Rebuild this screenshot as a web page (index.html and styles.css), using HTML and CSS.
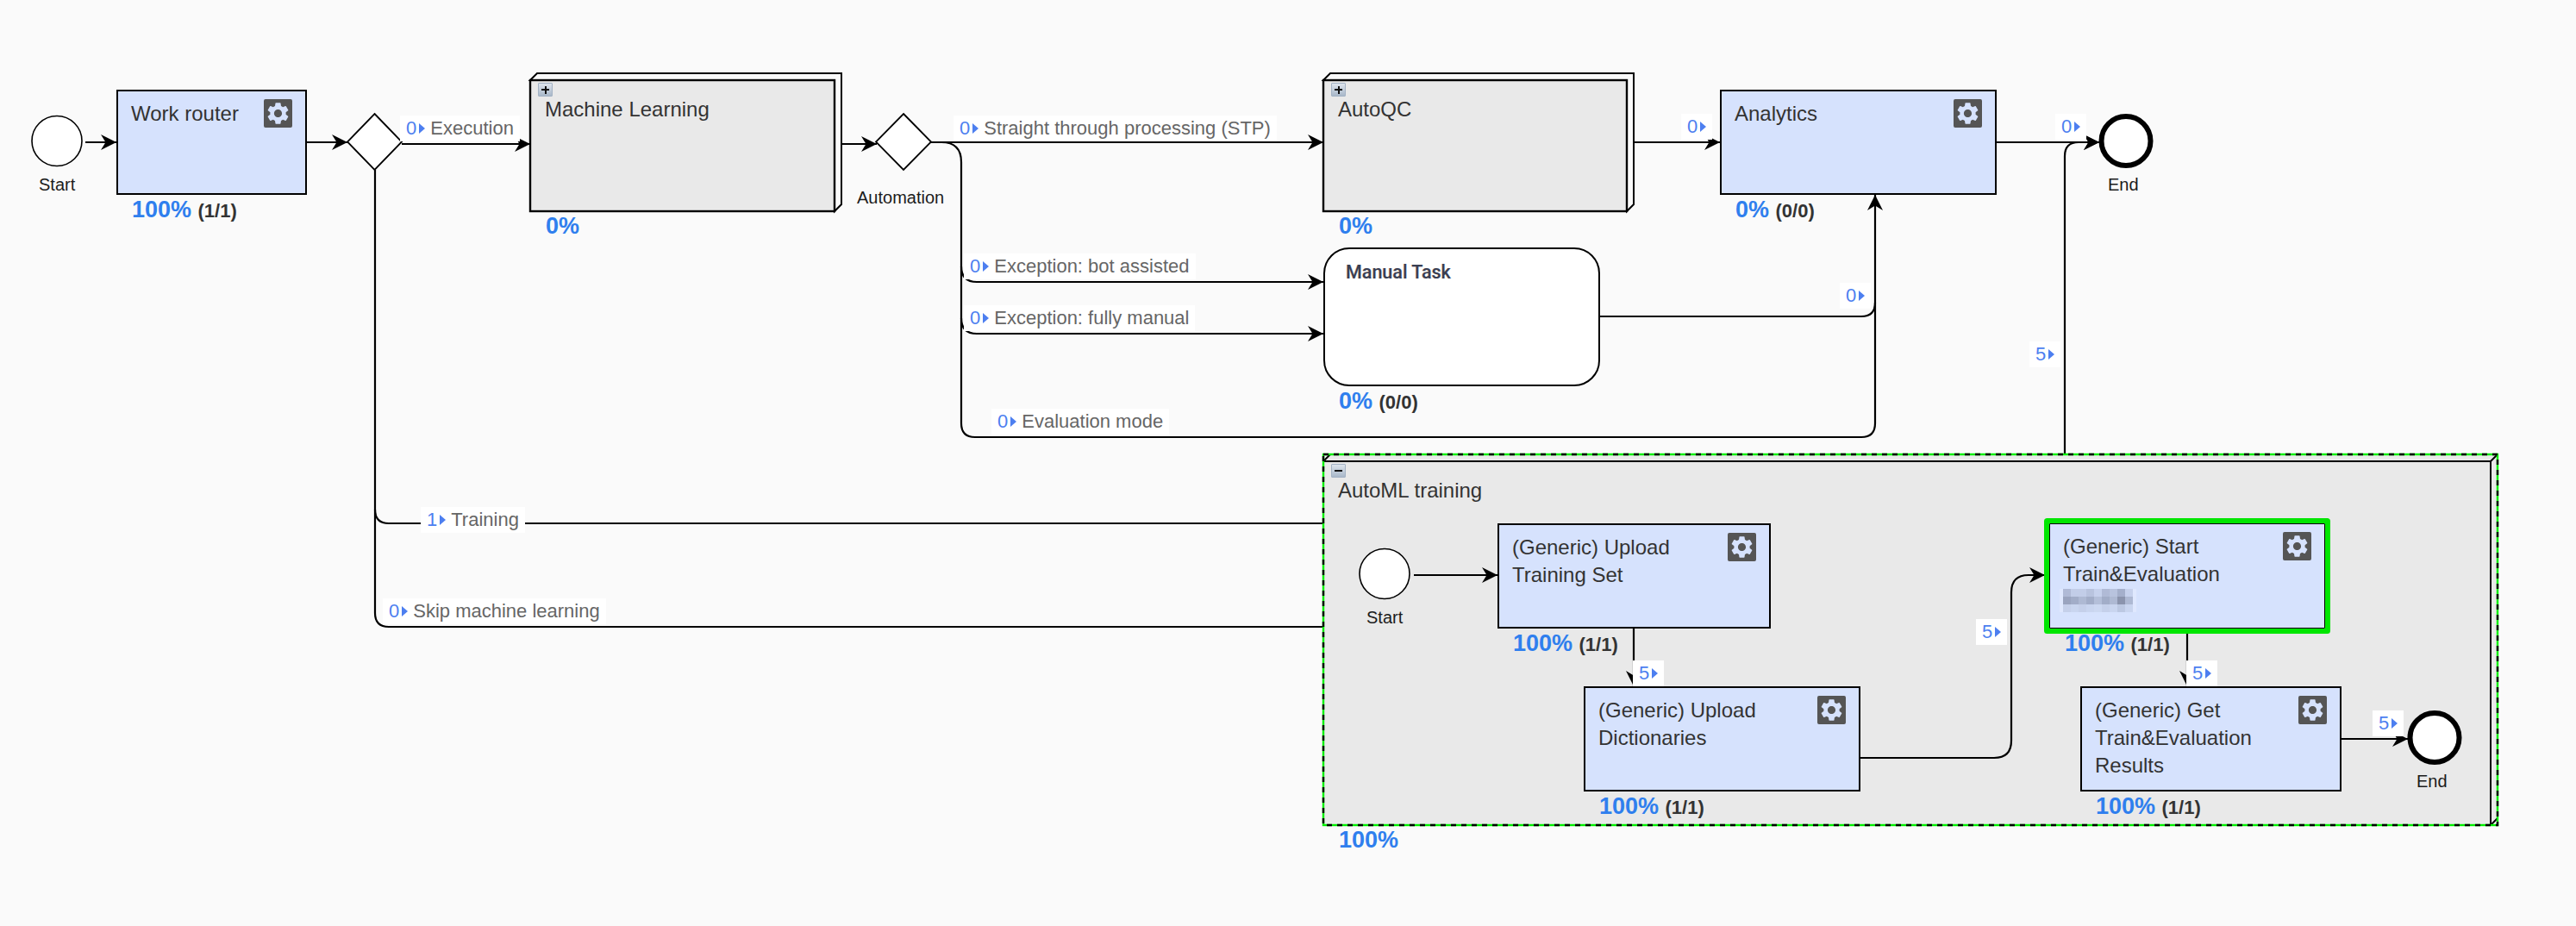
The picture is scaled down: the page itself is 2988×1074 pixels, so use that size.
FILE: index.html
```html
<!DOCTYPE html>
<html lang="en">
<head>
<meta charset="utf-8">
<title>Process diagram</title>
<link rel="stylesheet" href="styles.css">
</head>
<body>
<main class="canvas">
  <svg class="graph" width="2988" height="1074" viewBox="0 0 2988 1074" aria-hidden="true">
    <defs>
      <marker id="tip" markerUnits="userSpaceOnUse" markerWidth="20" markerHeight="20" refX="18" refY="10" orient="auto">
        <path d="M18 10 L0 1 L5.500 10 L0 19 Z" fill="#000"/>
      </marker>
      <symbol id="gear" viewBox="-1 -1 26 26">
        <rect x="-1" y="-1" width="26" height="26" rx="1.500" fill="#555"/>
        <path fill="#d6e2fd" fill-rule="evenodd" d="M19.140 12.940c.04-.3.06-.61.06-.94 0-.32-.02-.64-.07-.94l2.030-1.580a.49.49 0 0 0 .12-.61l-1.920-3.320a.488.488 0 0 0-.59-.22l-2.390.96c-.5-.38-1.030-.7-1.620-.94l-.36-2.540a.484.484 0 0 0-.48-.41h-3.840c-.24 0-.43.17-.47.41l-.36 2.540c-.59.24-1.130.57-1.620.94l-2.390-.96c-.22-.08-.47 0-.59.22L2.740 8.870c-.12.21-.08.47.12.61l2.030 1.580c-.05.3-.09.63-.09.94s.02.64.07.94l-2.030 1.580a.49.49 0 0 0-.12.61l1.920 3.320c.12.22.37.29.59.22l2.390-.96c.5.38 1.030.7 1.620.94l.36 2.540c.05.24.24.41.48.41h3.840c.24 0 .44-.17.47-.41l.36-2.540c.59-.24 1.130-.56 1.620-.94l2.390.96c.22.08.47 0 .59-.22l1.920-3.320c.12-.22.07-.47-.12-.61l-2.010-1.580zM12 15.600c-1.980 0-3.600-1.620-3.600-3.600s1.620-3.600 3.600-3.600 3.600 1.620 3.600 3.600-1.620 3.600-3.600 3.600z"/>
      </symbol>
    </defs>

    <!-- sub-processes -->
    <g class="sub-shape">
      <polygon class="sub-back" points="615,93 623,85 976,85 976,237 968,245 968,93"/>
      <rect class="sub-front" x="615" y="93" width="353" height="152"/>
      <polygon class="sub-back" points="1535,93 1543,85 1895,85 1895,237 1887,245 1887,93"/>
      <rect class="sub-front" x="1535" y="93" width="352" height="152"/>
      <polygon class="sub-fill" points="1535,535 1543,527 2897,527 2897,949 2889,957 1535,957"/>
      <path class="sub-edge" d="M1535 535L1543 527M1535 535H2889M2897 527L2889 535M2889 535V957M2897 949L2889 957"/>
    </g>

    <!-- sequence flows -->
    <g class="flows">
      <path marker-end="url(#tip)" d="M99 165H135"/>
      <path marker-end="url(#tip)" d="M355 165H403"/>
      <path marker-end="url(#tip)" d="M466 167H615"/>
      <path d="M435 197V591Q435 607 451 607H1535"/>
      <path d="M435 591V711Q435 727 451 727H1535"/>
      <path marker-end="url(#tip)" d="M976 167H1017"/>
      <path marker-end="url(#tip)" d="M1080 165H1535"/>
      <path d="M1092 165Q1115 165 1115 188V491Q1115 507 1131 507H2159Q2175 507 2175 491"/>
      <path marker-end="url(#tip)" d="M2175 491V226"/>
      <path marker-end="url(#tip)" d="M1115 309Q1115 327 1133 327H1535"/>
      <path marker-end="url(#tip)" d="M1115 369Q1115 387 1133 387H1535"/>
      <path marker-end="url(#tip)" d="M1895 165H1995"/>
      <path d="M1855 367H2159Q2175 367 2175 351"/>
      <path marker-end="url(#tip)" d="M2316 165H2435"/>
      <path marker-end="url(#tip)" d="M2395 527V181Q2395 165 2411 165H2435"/>
      <path marker-end="url(#tip)" d="M1640 667H1737"/>
      <path marker-end="url(#tip)" d="M1895 728V796"/>
      <path marker-end="url(#tip)" d="M2537 733V796"/>
      <path marker-end="url(#tip)" d="M2158 879H2313Q2333 879 2333 859V687Q2333 667 2353 667H2372"/>
      <path marker-end="url(#tip)" d="M2716 857H2793"/>
    </g>

    <!-- events and gateways -->
    <circle class="event" cx="66" cy="163.500" r="29"/>
    <polygon class="gateway" points="434.500,132 466,164.500 434.500,197 403,164.500"/>
    <polygon class="gateway" points="1048,132 1080,164.500 1048,197 1016,164.500"/>
    <circle class="event event-end" cx="2466" cy="163.500" r="28.500"/>
    <circle class="event" cx="1606" cy="665.500" r="29"/>
    <circle class="event event-end" cx="2824" cy="855.500" r="28.500"/>

    <!-- selection around the expanded sub-process -->
    <rect class="select-base" x="1535" y="527" width="1362" height="430"/>
    <rect class="select-dash" x="1535" y="527" width="1362" height="430"/>
  </svg>

  <span class="event-label el-start">Start</span>
  <span class="event-label el-auto">Automation</span>
  <span class="event-label el-end">End</span>
  <span class="event-label el-start2">Start</span>
  <span class="event-label el-end2">End</span>

  <section class="node n-ml">
    <div class="subprocess sub-short">
      <i class="expander expander-plus"></i>
      <h3 class="title">Machine Learning</h3>
    </div>
    <p class="metric"><b class="pct">0%</b></p>
  </section>
  <section class="node n-qc">
    <div class="subprocess sub-short">
      <i class="expander expander-plus"></i>
      <h3 class="title">AutoQC</h3>
    </div>
    <p class="metric"><b class="pct">0%</b></p>
  </section>
  <section class="node n-automl">
    <div class="subprocess sub-tall">
      <i class="expander"></i>
      <h3 class="title">AutoML training</h3>
    </div>
    <p class="metric"><b class="pct">100%</b></p>
  </section>

  <article class="node n-work">
    <div class="task"><h3 class="title">Work router</h3><svg class="gear"><use href="#gear"/></svg></div>
    <p class="metric"><b class="pct">100%</b> <b class="count">(1/1)</b></p>
  </article>
  <article class="node n-analytics">
    <div class="task"><h3 class="title">Analytics</h3><svg class="gear"><use href="#gear"/></svg></div>
    <p class="metric"><b class="pct">0%</b> <b class="count">(0/0)</b></p>
  </article>
  <article class="node n-manual">
    <div class="task task-manual"><h3 class="manual-title">Manual Task</h3></div>
    <p class="metric"><b class="pct">0%</b> <b class="count">(0/0)</b></p>
  </article>
  <article class="node n-upload">
    <div class="task"><h3 class="title">(Generic) Upload<br>Training Set</h3><svg class="gear"><use href="#gear"/></svg></div>
    <p class="metric"><b class="pct">100%</b> <b class="count">(1/1)</b></p>
  </article>
  <article class="node n-dict">
    <div class="task"><h3 class="title">(Generic) Upload<br>Dictionaries</h3><svg class="gear"><use href="#gear"/></svg></div>
    <p class="metric"><b class="pct">100%</b> <b class="count">(1/1)</b></p>
  </article>
  <article class="node n-start">
    <div class="task task-active">
      <div>
        <h3 class="title">(Generic) Start<br>Train&amp;Evaluation</h3>
        <svg class="redacted" viewBox="0 0 89 27" width="89" height="27" aria-hidden="true">
          <rect width="89" height="27" fill="#dfe8fe"/>
          <g class="r1">
            <rect class="c1" x="4" y="0" width="9" height="9"/><rect class="c2" x="13" y="0" width="9" height="9"/><rect class="c2" x="22" y="0" width="9" height="9"/><rect class="c3" x="31" y="0" width="9" height="9"/><rect class="c4" x="40" y="0" width="9" height="9"/><rect class="c1" x="49" y="0" width="9" height="9"/><rect class="c3" x="58" y="0" width="9" height="9"/><rect class="c5" x="67" y="0" width="9" height="9"/><rect class="c4" x="76" y="0" width="9" height="9"/>
            <rect class="d1" x="4" y="9" width="9" height="9"/><rect class="d2" x="13" y="9" width="9" height="9"/><rect class="d3" x="22" y="9" width="9" height="9"/><rect class="d2" x="31" y="9" width="9" height="9"/><rect class="d4" x="40" y="9" width="9" height="9"/><rect class="d2" x="49" y="9" width="9" height="9"/><rect class="d3" x="58" y="9" width="9" height="9"/><rect class="d5" x="67" y="9" width="9" height="9"/><rect class="d3" x="76" y="9" width="9" height="9"/>
            <rect class="e1" x="4" y="18" width="9" height="9"/><rect class="e2" x="13" y="18" width="9" height="9"/><rect class="e1" x="22" y="18" width="9" height="9"/><rect class="e2" x="31" y="18" width="9" height="9"/><rect class="e3" x="40" y="18" width="9" height="9"/><rect class="e1" x="49" y="18" width="9" height="9"/><rect class="e2" x="58" y="18" width="9" height="9"/><rect class="e4" x="67" y="18" width="9" height="9"/><rect class="e2" x="76" y="18" width="9" height="9"/>
          </g>
        </svg>
      </div>
      <svg class="gear"><use href="#gear"/></svg>
    </div>
    <p class="metric"><b class="pct">100%</b> <b class="count">(1/1)</b></p>
  </article>
  <article class="node n-get">
    <div class="task"><h3 class="title">(Generic) Get<br>Train&amp;Evaluation<br>Results</h3><svg class="gear"><use href="#gear"/></svg></div>
    <p class="metric"><b class="pct">100%</b> <b class="count">(1/1)</b></p>
  </article>

  <div class="flow-label l-exec"><span class="num">0</span><i class="tri"></i><span class="txt">Execution</span></div>
  <div class="flow-label l-stp"><span class="num">0</span><i class="tri"></i><span class="txt">Straight through processing (STP)</span></div>
  <div class="flow-label l-bot"><span class="num">0</span><i class="tri"></i><span class="txt">Exception: bot assisted</span></div>
  <div class="flow-label l-manual"><span class="num">0</span><i class="tri"></i><span class="txt">Exception: fully manual</span></div>
  <div class="flow-label l-eval"><span class="num">0</span><i class="tri"></i><span class="txt">Evaluation mode</span></div>
  <div class="flow-label l-train"><span class="num">1</span><i class="tri"></i><span class="txt">Training</span></div>
  <div class="flow-label l-skip"><span class="num">0</span><i class="tri"></i><span class="txt">Skip machine learning</span></div>
  <div class="flow-label l-qc"><span class="num">0</span><i class="tri"></i></div>
  <div class="flow-label l-an"><span class="num">0</span><i class="tri"></i></div>
  <div class="flow-label l-mt"><span class="num">0</span><i class="tri"></i></div>
  <div class="flow-label l-5top"><span class="num">5</span><i class="tri"></i></div>
  <div class="flow-label l-5a"><span class="num">5</span><i class="tri"></i></div>
  <div class="flow-label l-5b"><span class="num">5</span><i class="tri"></i></div>
  <div class="flow-label l-5c"><span class="num">5</span><i class="tri"></i></div>
  <div class="flow-label l-5d"><span class="num">5</span><i class="tri"></i></div>
</main>
</body>
</html>
```

FILE: styles.css
```css
* { box-sizing: border-box; }

html, body {
  margin: 0;
  background: #fafafa;
}

.canvas {
  position: relative;
  width: 2988px;
  height: 1074px;
  overflow: hidden;
  font-family: "Liberation Sans", Arial, sans-serif;
  color: #333;
}

.graph {
  position: absolute;
  left: 0;
  top: 0;
}

/* shapes */
.sub-back { fill: #fafafa; stroke: #000; stroke-width: 2; }
.sub-front { fill: #e9e9e9; stroke: #000; stroke-width: 2.400; }
.sub-fill { fill: #e9e9e9; }
.sub-edge { fill: none; stroke: #000; stroke-width: 2; }

.flows path {
  fill: none;
  stroke: #000;
  stroke-width: 2.200;
}

.event { fill: #fff; stroke: #000; stroke-width: 1.600; }
.event-end { stroke-width: 6; }
.gateway { fill: #fff; stroke: #000; stroke-width: 1.800; }

.select-base { fill: none; stroke: #00ee00; stroke-width: 2.400; }
.select-dash { fill: none; stroke: #000; stroke-width: 2.400; stroke-dasharray: 6 6; }

/* event captions */
.event-label {
  position: absolute;
  font-size: 20px;
  line-height: 23px;
  color: #1c1c1c;
}
.el-start { left: 45px; top: 203px; }
.el-auto { left: 994px; top: 218px; }
.el-end { left: 2445px; top: 203px; }
.el-start2 { left: 1585px; top: 705px; }
.el-end2 { left: 2803px; top: 895px; }

/* diagram nodes */
.node { position: absolute; }
.n-ml { left: 615px; top: 93px; width: 353px; }
.n-qc { left: 1535px; top: 93px; width: 352px; }
.n-automl { left: 1535px; top: 535px; width: 1354px; }
.n-work { left: 135px; top: 104px; width: 221px; }
.n-analytics { left: 1995px; top: 104px; width: 321px; }
.n-manual { left: 1535px; top: 287px; width: 321px; }
.n-upload { left: 1737px; top: 607px; width: 317px; }
.n-dict { left: 1837px; top: 796px; width: 321px; }
.n-start { left: 2377px; top: 607px; width: 320px; }
.n-get { left: 2413px; top: 796px; width: 303px; }

.title {
  margin: 0;
  font-size: 24px;
  font-weight: 400;
  line-height: 32px;
  color: #333;
}

.subprocess {
  display: flex;
  flex-direction: column;
  align-items: flex-start;
  padding: 3px 0 0 17px;
}
.sub-short { height: 152px; }
.sub-tall { height: 422px; }

.expander {
  position: relative;
  display: block;
  width: 17px;
  height: 16px;
  margin: 0 0 -1px -8px;
  border: 1px solid #a3b2c4;
  border-radius: 1px;
  background: linear-gradient(#dde4ec, #a9b8c9);
}
.expander::before {
  content: "";
  position: absolute;
  left: 3px;
  top: 6px;
  width: 9px;
  height: 2px;
  background: #111;
}
.expander-plus::after {
  content: "";
  position: absolute;
  left: 6.500px;
  top: 2.500px;
  width: 2px;
  height: 9px;
  background: #111;
}

.task {
  display: flex;
  justify-content: space-between;
  align-items: flex-start;
  height: 122px;
  padding: 10px 15px 0;
  border: 2.500px solid #000;
  background: #d6e2fd;
}
.task-manual {
  height: 161px;
  padding: 13px 24px 0;
  border-width: 2.500px;
  border-radius: 30px;
  background: #fff;
}
.task-active {
  border-width: 1.500px;
  border-color: #000;
  box-shadow: 0 0 0 6px #00e600;
  border-radius: 1px;
}

.manual-title {
  margin: 0;
  font-family: Roboto, "Liberation Sans", sans-serif;
  font-size: 21.500px;
  font-weight: 500;
  line-height: 28px;
  color: #3a3f52;
  text-shadow: -0.5px 0 0 rgba(220, 140, 50, 0.35), 0.5px 0 0 rgba(60, 110, 190, 0.35);
}

.gear {
  flex: none;
  width: 33px;
  height: 33px;
  margin-top: -1px;
}

.redacted {
  display: block;
  margin: 1px 0 0 -4px;
}
.c1 { fill: #b0bad6; } .c2 { fill: #c2cde8; } .c3 { fill: #b8c3de; } .c4 { fill: #c6d1ec; } .c5 { fill: #a4afcb; }
.d1 { fill: #9aa4bf; } .d2 { fill: #a2adc8; } .d3 { fill: #aeb9d3; } .d4 { fill: #b4bfd9; } .d5 { fill: #8b94ad; }
.e1 { fill: #c5d0ea; } .e2 { fill: #c9d5ef; } .e3 { fill: #ccd8f1; } .e4 { fill: #bcc8e2; }

.metric {
  position: relative;
  margin: 2px 0 0;
  padding-left: 18px;
  line-height: 30px;
  white-space: nowrap;
}
.pct {
  font-size: 27px;
  color: #2f7fee;
}
.count {
  margin-left: 3px;
  font-size: 22px;
  color: #333;
}

/* flow labels */
.flow-label {
  position: absolute;
  display: flex;
  align-items: center;
  height: 30px;
  padding: 0 7px;
  background: #fff;
  font-size: 22px;
  line-height: 30px;
  white-space: nowrap;
}
.num { color: #4d7ff0; }
.tri {
  width: 0;
  height: 0;
  margin-left: 3px;
  border-left: 7px solid #4d7ff0;
  border-top: 6px solid transparent;
  border-bottom: 6px solid transparent;
}
.txt { margin-left: 6px; color: #666; }

.l-exec { left: 464px; top: 134px; }
.l-stp { left: 1106px; top: 134px; }
.l-bot { left: 1118px; top: 294px; }
.l-manual { left: 1118px; top: 354px; }
.l-eval { left: 1150px; top: 474px; }
.l-train { left: 488px; top: 588px; }
.l-skip { left: 444px; top: 694px; }
.l-qc { left: 1950px; top: 132px; }
.l-an { left: 2384px; top: 132px; }
.l-mt { left: 2134px; top: 328px; }
.l-5top { left: 2354px; top: 396px; }
.l-5a { left: 1894px; top: 766px; }
.l-5b { left: 2292px; top: 718px; }
.l-5c { left: 2536px; top: 766px; }
.l-5d { left: 2752px; top: 824px; }
```
